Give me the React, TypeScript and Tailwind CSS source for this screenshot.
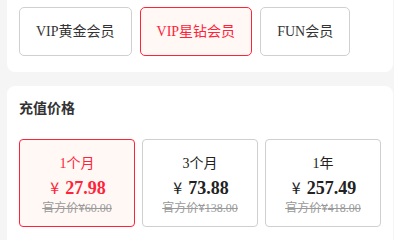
import React from "react";

const serif = { fontFamily: '"Liberation Serif", "Noto Sans CJK SC", serif' };
const cjk = { fontFamily: '"Noto Sans CJK SC", sans-serif' };

const tiers = [
  { name: "VIP黄金会员", active: false },
  { name: "VIP星钻会员", active: true },
  { name: "FUN会员", active: false },
];

const prices = [
  { label: "1个月", price: "27.98", orig: "60.00", active: true },
  { label: "3个月", price: "73.88", orig: "138.00", active: false },
  { label: "1年", price: "257.49", orig: "418.00", active: false },
];

export default function App() {
  return (
    <div className="w-[394px] h-[240px] overflow-hidden bg-[#f5f5f5] pl-[7px] pr-[1px]" style={serif}>
      <div className="bg-white rounded-b-[8px] px-[12px] pt-[7px] pb-[16px] flex gap-[8px]">
        {tiers.map((t) => (
          <div
            key={t.name}
            className={
              t.active
                ? "h-[49px] px-[16px] flex items-center justify-center rounded-[5px] border border-[#ff2339] bg-[#fff8f5] text-[#ff2339] text-[14px]"
                : "h-[49px] px-[16px] flex items-center justify-center rounded-[5px] border border-[#d0d0d0] bg-white text-[#333] text-[14px]"
            }
          >
            {t.name}
          </div>
        ))}
      </div>
      <div className="mt-[14px] bg-white rounded-t-[8px] px-[12px] pt-[11px] h-[200px]">
        <div className="text-[14px] leading-[20px] font-bold text-[#333]" style={cjk}>
          充值价格
        </div>
        <div className="mt-[22px] grid grid-cols-3 gap-[7px]">
          {prices.map((p) => (
            <div
              key={p.label}
              className={
                p.active
                  ? "h-[88px] rounded-[4px] border border-[#ff2339] bg-[#fff8f5] flex flex-col items-center pt-[14px] text-[#ff2339]"
                  : "h-[88px] rounded-[4px] border border-[#cfcfcf] bg-white flex flex-col items-center pt-[14px] text-[#222]"
              }
            >
              <div className="text-[14px] leading-[20px]">{p.label}</div>
              <div className="h-[24px] mt-[1px] flex items-baseline pl-[2px]">
                <span className="text-[16px] leading-[24px] font-normal mr-[6px]" style={cjk}>¥</span>
                <span className="text-[18px] leading-[24px] font-bold">{p.price}</span>
              </div>
              <div className="text-[12px] leading-[16px] text-[#999] line-through">
                官方价<span style={cjk}>¥</span>{p.orig}
              </div>
            </div>
          ))}
        </div>
      </div>
    </div>
  );
}
